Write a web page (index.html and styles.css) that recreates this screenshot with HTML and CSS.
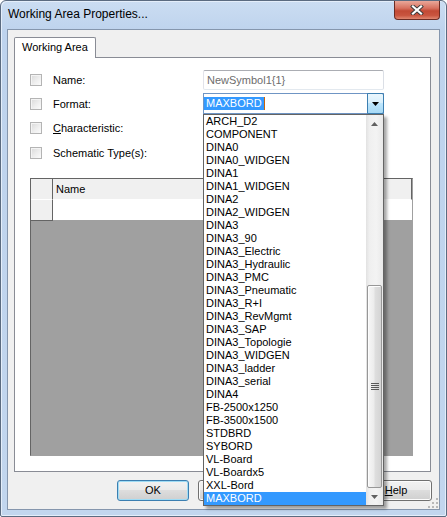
FILE: index.html
```html
<!DOCTYPE html>
<html>
<head>
<meta charset="utf-8">
<link rel="stylesheet" href="styles.css">
</head>
<body>
<div class="window">
  <div class="titlebar">
    <span class="title">Working Area Properties...</span>
    <div class="close">
      <svg width="14" height="10" viewBox="0 0 14 10">
        <path d="M3 1.5 L11 8.5 M11 1.5 L3 8.5" stroke="#3a3a3a" stroke-width="4" stroke-linecap="square"/>
        <path d="M3 1.5 L11 8.5 M11 1.5 L3 8.5" stroke="#ffffff" stroke-width="2.2" stroke-linecap="square"/>
      </svg>
    </div>
  </div>
  <div class="client">
    <div class="tabs"><div class="tab">Working Area</div></div>
    <div class="panel">
      <div class="row r1">
        <span class="chk"></span><span class="lbl">Name:</span>
        <div class="input">NewSymbol1{1}</div>
      </div>
      <div class="row r2">
        <span class="chk"></span><span class="lbl">Format:</span>
        <div class="combo">
          <span class="sel">MAXBORD</span><span class="caret"></span>
          <span class="dd"><svg width="7" height="4" viewBox="0 0 7 4"><path d="M0 0 H7 L3.5 4 Z" fill="#000"/></svg></span>
        </div>
      </div>
      <div class="row r3">
        <span class="chk"></span><span class="lbl"><u>C</u>haracteristic:</span>
      </div>
      <div class="row r4">
        <span class="chk"></span><span class="lbl">Schematic Type(s):</span>
      </div>
      <div class="grid">
        <div class="grow head"><div class="rh"></div><div class="cell hname">Name</div></div>
        <div class="grow body"><div class="rh rh1"></div><div class="cell white"></div></div>
      </div>
    </div>
    <div class="buttons">
      <div class="btn default">OK</div>
      <div class="btn"></div>
      <div class="btn"></div>
      <div class="btn"><u>H</u>elp</div>
    </div>
    <svg class="grip" width="10" height="10" viewBox="0 0 10 10">
      <g fill="#b8b8b8">
        <rect x="8" y="0" width="2" height="2"/>
        <rect x="4" y="4" width="2" height="2"/><rect x="8" y="4" width="2" height="2"/>
        <rect x="0" y="8" width="2" height="2"/><rect x="4" y="8" width="2" height="2"/><rect x="8" y="8" width="2" height="2"/>
      </g>
    </svg>
  </div>
  <div class="dropdown">
    <ul class="items">
      <li>ARCH_D2</li>
      <li>COMPONENT</li>
      <li>DINA0</li>
      <li>DINA0_WIDGEN</li>
      <li>DINA1</li>
      <li>DINA1_WIDGEN</li>
      <li>DINA2</li>
      <li>DINA2_WIDGEN</li>
      <li>DINA3</li>
      <li>DINA3_90</li>
      <li>DINA3_Electric</li>
      <li>DINA3_Hydraulic</li>
      <li>DINA3_PMC</li>
      <li>DINA3_Pneumatic</li>
      <li>DINA3_R+I</li>
      <li>DINA3_RevMgmt</li>
      <li>DINA3_SAP</li>
      <li>DINA3_Topologie</li>
      <li>DINA3_WIDGEN</li>
      <li>DINA3_ladder</li>
      <li>DINA3_serial</li>
      <li>DINA4</li>
      <li>FB-2500x1250</li>
      <li>FB-3500x1500</li>
      <li>STDBRD</li>
      <li>SYBORD</li>
      <li>VL-Board</li>
      <li>VL-Boardx5</li>
      <li>XXL-Bord</li>
      <li class="hl">MAXBORD</li>
    </ul>
    <div class="scrollbar">
      <div class="sbtn"><svg width="7" height="4" viewBox="0 0 7 4"><path d="M0 4 H7 L3.5 0 Z" fill="#606060"/></svg></div>
      <div class="track">
        <div class="thumb">
          <svg width="8" height="8" viewBox="0 0 8 8"><g fill="#5a5a5a"><rect y="0" width="8" height="1"/><rect y="2" width="8" height="1"/><rect y="4" width="8" height="1"/><rect y="6" width="8" height="1"/></g></svg>
        </div>
      </div>
      <div class="sbtn"><svg width="7" height="4" viewBox="0 0 7 4"><path d="M0 0 H7 L3.5 4 Z" fill="#606060"/></svg></div>
    </div>
  </div>
</div>
</body>
</html>
```

FILE: styles.css
```css
* { box-sizing: border-box; }
html, body { margin: 0; padding: 0; background: #ffffff; }
body {
  font-family: "Liberation Sans", Arial, sans-serif;
  font-size: 11px;
  color: #000;
}
.window {
  position: relative;
  width: 447px;
  height: 517px;
  border: 1px solid #5b6b80;
  border-radius: 6px 6px 2px 2px;
  background: linear-gradient(#cbddf2 0, #bed3ed 30px, #c2d6ee 100%);
  box-shadow: inset 1px 1px 0 #e4eefa, inset -1px -1px 0 #e4eefa;
}
.titlebar {
  display: flex;
  align-items: flex-start;
  height: 28px;
}
.title {
  padding: 6px 0 0 7px;
  font-size: 12px;
  color: #000;
}
.close {
  margin-left: auto;
  margin-right: 6px;
  width: 46px;
  height: 19px;
  border: 1px solid #6b2c24;
  border-top: none;
  border-radius: 0 0 4px 4px;
  background: linear-gradient(#eaa89a 0, #d7715f 40%, #c24a35 55%, #c9553f 80%, #e08770 100%);
  display: flex;
  align-items: center;
  justify-content: center;
}
.close svg { margin-top: -1px; }
.client {
  position: relative;
  margin: 0 6px;
  height: 481px;
  border: 1px solid #8596ad;
  background: #f0f0f0;
}
.tabs {
  display: flex;
  margin: 7px 0 0 6px;
}
.tab {
  position: relative;
  z-index: 1;
  height: 21px;
  margin-bottom: -1px;
  padding: 0 7px;
  line-height: 19px;
  background: #ffffff;
  border: 1px solid #898c95;
  border-bottom: none;
  border-radius: 2px 2px 0 0;
}
.panel {
  margin-left: 6px;
  width: 417px;
  height: 415px;
  border: 1px solid #898c95;
  background: #ffffff;
  padding: 12px 0 0 15px;
}
.row {
  display: flex;
  align-items: center;
  height: 20px;
}
.r2 { margin-top: 3px; height: 21px; }
.r3 { margin-top: 4px; }
.r4 { margin-top: 5px; }
.chk {
  width: 12px;
  height: 12px;
  border: 1px solid #b4b4b4;
  background: linear-gradient(135deg, #d9d9d9 0, #eeeeee 55%, #fbfbfb 100%);
  box-shadow: inset 1px 1px 0 #f4f4f4;
}
.lbl {
  margin-left: 11px;
  width: 150px;
}
.input {
  width: 181px;
  height: 20px;
  border: 1px solid #abadb3;
  border-color: #abadb3 #dbdfe6 #e3e9ef #e2e3ea;
  border-radius: 2px;
  padding: 0 0 0 3px;
  line-height: 18px;
  color: #6d6d6d;
  background: #fff;
}
.combo {
  display: flex;
  align-items: center;
  width: 181px;
  height: 21px;
  border: 1px solid #6f95c4;
  background: #fff;
}
.sel {
  background: #3399ff;
  color: #fff;
  padding: 0 2px;
  height: 13px;
  line-height: 13px;
}
.caret {
  width: 1px;
  height: 13px;
  background: #c8640a;
}
.dd {
  margin: -1px -1px -1px auto;
  align-self: stretch;
  width: 17px;
  border: 1px solid #3c7fb1;
  border-radius: 0 2px 2px 0;
  background: linear-gradient(#eaf6fd 0, #d9f0fc 45%, #bee6fd 50%, #a7d9f5 100%);
  display: flex;
  align-items: center;
  justify-content: center;
}
.grid {
  margin-top: 15px;
  width: 383px;
  height: 278px;
  border: 1px solid #646464;
  border-right-color: #a0a0a0;
  border-bottom-color: #a0a0a0;
  background: #a0a0a0;
}
.grow {
  display: flex;
  height: 21px;
}
.rh {
  width: 22px;
  background: #f0f0f0;
  border-right: 1px solid #646464;
  border-bottom: 1px solid #ffffff;
}
.rh1 { border-bottom: 1px solid #646464; }
.cell { flex: 1; }
.hname {
  background: #f0f0f0;
  border-right: 1px solid #646464;
  border-bottom: 1px solid #ffffff;
  padding-left: 3px;
  line-height: 20px;
}
.white { background: #ffffff; border-bottom: 1px solid #a0a0a0; }
.buttons {
  display: flex;
  gap: 9px;
  margin: 8px 0 0 109px;
}
.btn {
  width: 72px;
  height: 21px;
  border: 1px solid #707070;
  border-radius: 3px;
  background: linear-gradient(#f2f2f2 0, #ebebeb 45%, #dddddd 50%, #cfcfcf 100%);
  box-shadow: inset 0 0 0 1px #fcfcfc;
  text-align: center;
  line-height: 19px;
}
.btn.default {
  border-color: #3c7fb1;
  box-shadow: inset 0 0 0 1px #9fdcf5;
}
.grip {
  position: absolute;
  right: 1px;
  bottom: 1px;
}
.dropdown {
  position: absolute;
  left: 202px;
  top: 113px;
  width: 181px;
  display: flex;
  border: 1px solid #646464;
  background: #fff;
  box-shadow: 3px 3px 3px rgba(0, 0, 0, 0.35);
  z-index: 5;
}
.items {
  list-style: none;
  margin: 0;
  padding: 0;
  flex: 1;
}
.items li {
  height: 13px;
  line-height: 13px;
  padding-left: 2px;
  white-space: nowrap;
}
.items li.hl { background: #3399ff; color: #fff; }
.scrollbar {
  width: 17px;
  display: flex;
  flex-direction: column;
  background: linear-gradient(to right, #e2e2e2 0, #efefef 20%, #f3f3f3 60%, #e9e9e9 100%);
}
.sbtn {
  height: 17px;
  display: flex;
  align-items: center;
  justify-content: center;
}
.track {
  flex: 1;
  display: flex;
  flex-direction: column;
  justify-content: flex-end;
}
.thumb {
  height: 203px;
  margin: 0 1px 0 1px;
  border: 1px solid #979797;
  border-radius: 2px;
  background: linear-gradient(to right, #f7f7f7 0, #ececec 45%, #dedede 55%, #d4d4d4 100%);
  box-shadow: inset 1px 1px 0 #fdfdfd;
  display: flex;
  align-items: center;
  justify-content: center;
}
```
